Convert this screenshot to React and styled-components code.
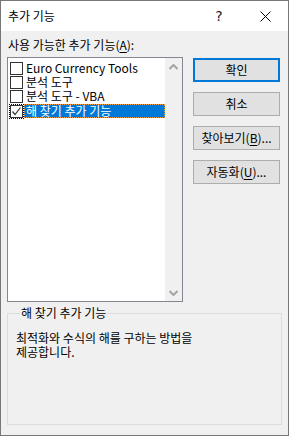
import React from 'react';
import styled, { createGlobalStyle } from 'styled-components';

const GlobalStyle = createGlobalStyle`
  html, body {
    margin: 0;
    padding: 0;
    background: #f0f0f0;
  }
  * {
    box-sizing: border-box;
  }
`;

const Window = styled.div`
  width: 289px;
  height: 436px;
  border: 1px solid #777777;
  background-color: #f0f0f0;
  display: flex;
  flex-direction: column;
  font-family: "Noto Sans CJK KR", "Noto Sans", sans-serif;
  font-size: 12px;
  color: #000;
`;

const TitleBar = styled.div`
  height: 30px;
  flex-shrink: 0;
  background-color: #ffffff;
  display: flex;
  align-items: center;
  padding-left: 7px;
`;

const Title = styled.div`
  flex: 1;
  line-height: 16px;
  margin-top: -1px;
`;

const CaptionButton = styled.div`
  width: 46px;
  height: 30px;
  display: flex;
  align-items: center;
  justify-content: center;
  font-size: ${p => p.$size || 12}px;
  font-family: "DejaVu Sans", sans-serif;
  color: #222;
`;

const Body = styled.div`
  flex: 1;
  display: flex;
  flex-direction: column;
  padding: 6px 6px 10px 6px;
`;

const Label = styled.div`
  line-height: 16px;
  padding-left: 1px;
`;

const Underline = styled.span`
  text-decoration: underline;
  text-underline-offset: 2px;
`;

const TopRow = styled.div`
  display: flex;
  margin-top: 4px;
`;

const ListBox = styled.div`
  width: 176px;
  height: 245px;
  border: 1px solid #828790;
  background-color: #ffffff;
  display: flex;
`;

const Items = styled.div`
  flex: 1;
  padding: 3px 0 0 2px;
  display: flex;
  flex-direction: column;
`;

const Item = styled.div`
  height: 14px;
  display: flex;
  align-items: center;
  white-space: nowrap;
`;

const CheckBox = styled.div`
  width: 13px;
  height: 13px;
  flex-shrink: 0;
  border: 1px solid #333333;
  background: #ffffff;
  display: flex;
  align-items: center;
  justify-content: center;
  outline: ${p => (p.$focus ? '1px dotted #000' : 'none')};
  margin-top: ${p => (p.$focus ? '2px' : '0')};
`;

const ItemText = styled.span`
  margin-left: 1px;
  padding: 0 3px 0 2px;
  line-height: 14px;
  flex: ${p => (p.$selected ? 1 : 'none')};
  margin-top: ${p => (p.$selected ? '2px' : '0')};
  background-color: ${p => (p.$selected ? '#0078d7' : 'transparent')};
  color: ${p => (p.$selected ? '#ffffff' : '#000000')};
  outline: ${p => (p.$selected ? '1px dotted #f39c3c' : 'none')};
  outline-offset: -1px;
`;

const ScrollBar = styled.div`
  width: 17px;
  flex-shrink: 0;
  background-color: #f0f0f0;
  display: flex;
  flex-direction: column;
  justify-content: space-between;
  align-items: center;
  padding: 6px 0 5px 0;
`;

const Buttons = styled.div`
  display: flex;
  flex-direction: column;
  gap: 10px;
  margin-left: 10px;
  margin-top: 1px;
`;

const Button = styled.div`
  width: 87px;
  height: 24px;
  border: ${p => (p.$default ? '2px solid #0078d7' : '1px solid #adadad')};
  background-color: #e1e1e1;
  display: flex;
  align-items: center;
  justify-content: center;
  line-height: 16px;
`;

const Group = styled.fieldset`
  flex: 1;
  margin: 3px 0 0 0;
  padding: 0 8px;
  border: 1px solid #dcdcdc;
  min-width: 0;
`;

const Legend = styled.legend`
  padding: 0 1px;
  margin-left: 4px;
  line-height: 16px;
`;

const Description = styled.div`
  margin-top: 10px;
  line-height: 14px;
  width: 215px;
  word-break: keep-all;
`;

const Chevron = ({ up }) => (
  <svg width="9" height="6" viewBox="0 0 9 6">
    <path
      d={up ? 'M0.5 5 L4.5 1 L8.5 5' : 'M0.5 1 L4.5 5 L8.5 1'}
      fill="none"
      stroke="#a3a3a3"
      strokeWidth="2"
    />
  </svg>
);

const Check = () => (
  <svg width="11" height="11" viewBox="0 0 11 11">
    <path d="M1.5 5.5 L4 8.5 L9.5 1.5" fill="none" stroke="#333" strokeWidth="1.2" />
  </svg>
);

const addIns = [
  { name: 'Euro Currency Tools', checked: false },
  { name: '분석 도구', checked: false },
  { name: '분석 도구 - VBA', checked: false },
  { name: '해 찾기 추가 기능', checked: true, selected: true },
];

const App = () => {
  return (
    <>
      <GlobalStyle />
      <Window>
        <TitleBar>
          <Title>추가 기능</Title>
          <CaptionButton $size={14}>?</CaptionButton>
          <CaptionButton>
            <svg width="11" height="11" viewBox="0 0 11 11">
              <path d="M0.5 0.5 L10.5 10.5 M10.5 0.5 L0.5 10.5" stroke="#000" strokeWidth="1" />
            </svg>
          </CaptionButton>
        </TitleBar>
        <Body>
          <Label>
            사용 가능한 추가 기능(<Underline>A</Underline>):
          </Label>
          <TopRow>
            <ListBox>
              <Items>
                {addIns.map(item => (
                  <Item key={item.name}>
                    <CheckBox $focus={item.selected}>{item.checked && <Check />}</CheckBox>
                    <ItemText $selected={item.selected}>{item.name}</ItemText>
                  </Item>
                ))}
              </Items>
              <ScrollBar>
                <Chevron up />
                <Chevron />
              </ScrollBar>
            </ListBox>
            <Buttons>
              <Button $default>확인</Button>
              <Button>취소</Button>
              <Button>
                찾아보기(<Underline>B</Underline>)...
              </Button>
              <Button>
                자동화(<Underline>U</Underline>)...
              </Button>
            </Buttons>
          </TopRow>
          <Group>
            <Legend>해 찾기 추가 기능</Legend>
            <Description>최적화와 수식의 해를 구하는 방법을 제공합니다.</Description>
          </Group>
        </Body>
      </Window>
    </>
  );
};

export default App;
